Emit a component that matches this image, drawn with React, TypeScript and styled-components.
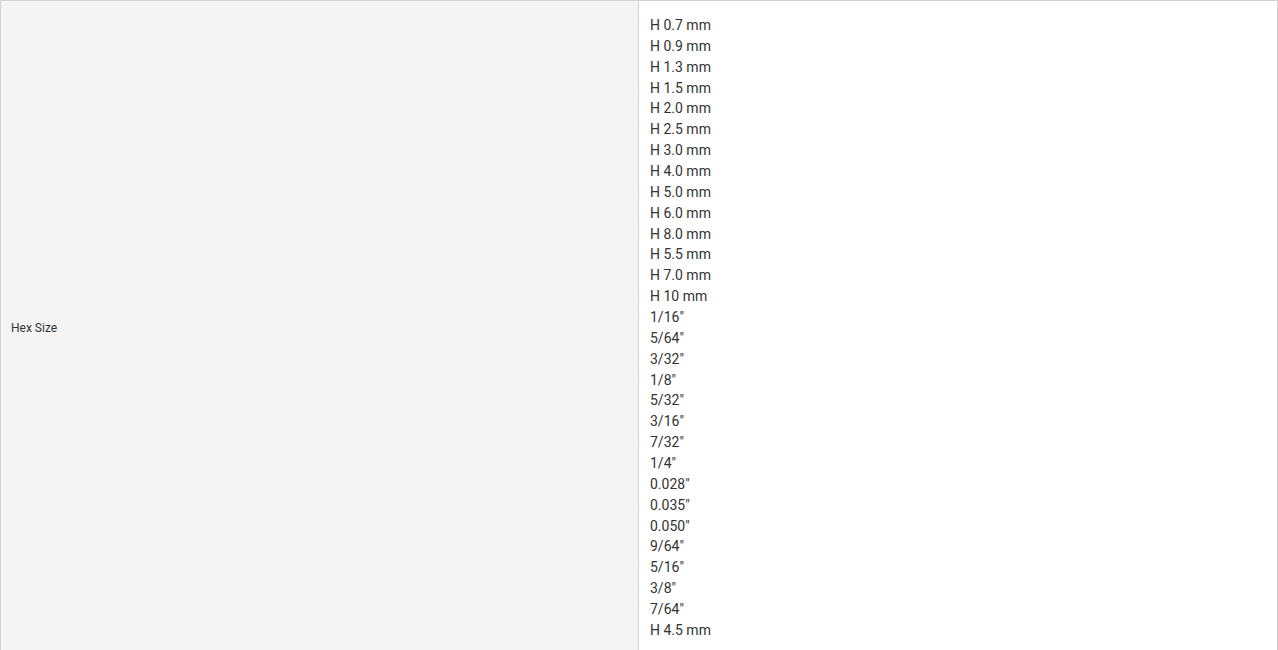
import React from 'react';
import styled, { createGlobalStyle } from 'styled-components';

const SIZES = [
    'H 0.7 mm',
    'H 0.9 mm',
    'H 1.3 mm',
    'H 1.5 mm',
    'H 2.0 mm',
    'H 2.5 mm',
    'H 3.0 mm',
    'H 4.0 mm',
    'H 5.0 mm',
    'H 6.0 mm',
    'H 8.0 mm',
    'H 5.5 mm',
    'H 7.0 mm',
    'H 10 mm',
    '1/16"',
    '5/64"',
    '3/32"',
    '1/8"',
    '5/32"',
    '3/16"',
    '7/32"',
    '1/4"',
    '0.028"',
    '0.035"',
    '0.050"',
    '9/64"',
    '5/16"',
    '3/8"',
    '7/64"',
    'H 4.5 mm',
];

const GlobalStyle = createGlobalStyle`
    body {
        margin: 0;
        background: #ffffff;
        font-family: Roboto, 'Liberation Sans', sans-serif;
        color: #333333;
    }
`;

const App: React.FC = () => {
    return (
        <>
            <GlobalStyle />
            <SpecTable>
                <tbody>
                    <tr>
                        <LabelCell>Hex Size</LabelCell>
                        <ValueCell>
                            {SIZES.map((size, i) => (
                                <ValueLine key={i}>{size}</ValueLine>
                            ))}
                        </ValueCell>
                    </tr>
                </tbody>
            </SpecTable>
        </>
    );
};

const SpecTable = styled.table`
    width: 100%;
    border-collapse: collapse;
    table-layout: fixed;
`;

const LabelCell = styled.td`
    width: 617px;
    background: #f4f4f4;
    border: 1px solid #d2d2d2;
    padding: 2px 10px 0;
    font-size: 12px;
    color: #333333;
    vertical-align: middle;
`;

const ValueCell = styled.td`
    background: #ffffff;
    border: 1px solid #d2d2d2;
    padding: 14px 10px 12px 11px;
    font-size: 14px;
    line-height: 20.86px;
    color: #333333;
    vertical-align: top;
`;

const ValueLine = styled.div`
    white-space: nowrap;
`;

export default App;
